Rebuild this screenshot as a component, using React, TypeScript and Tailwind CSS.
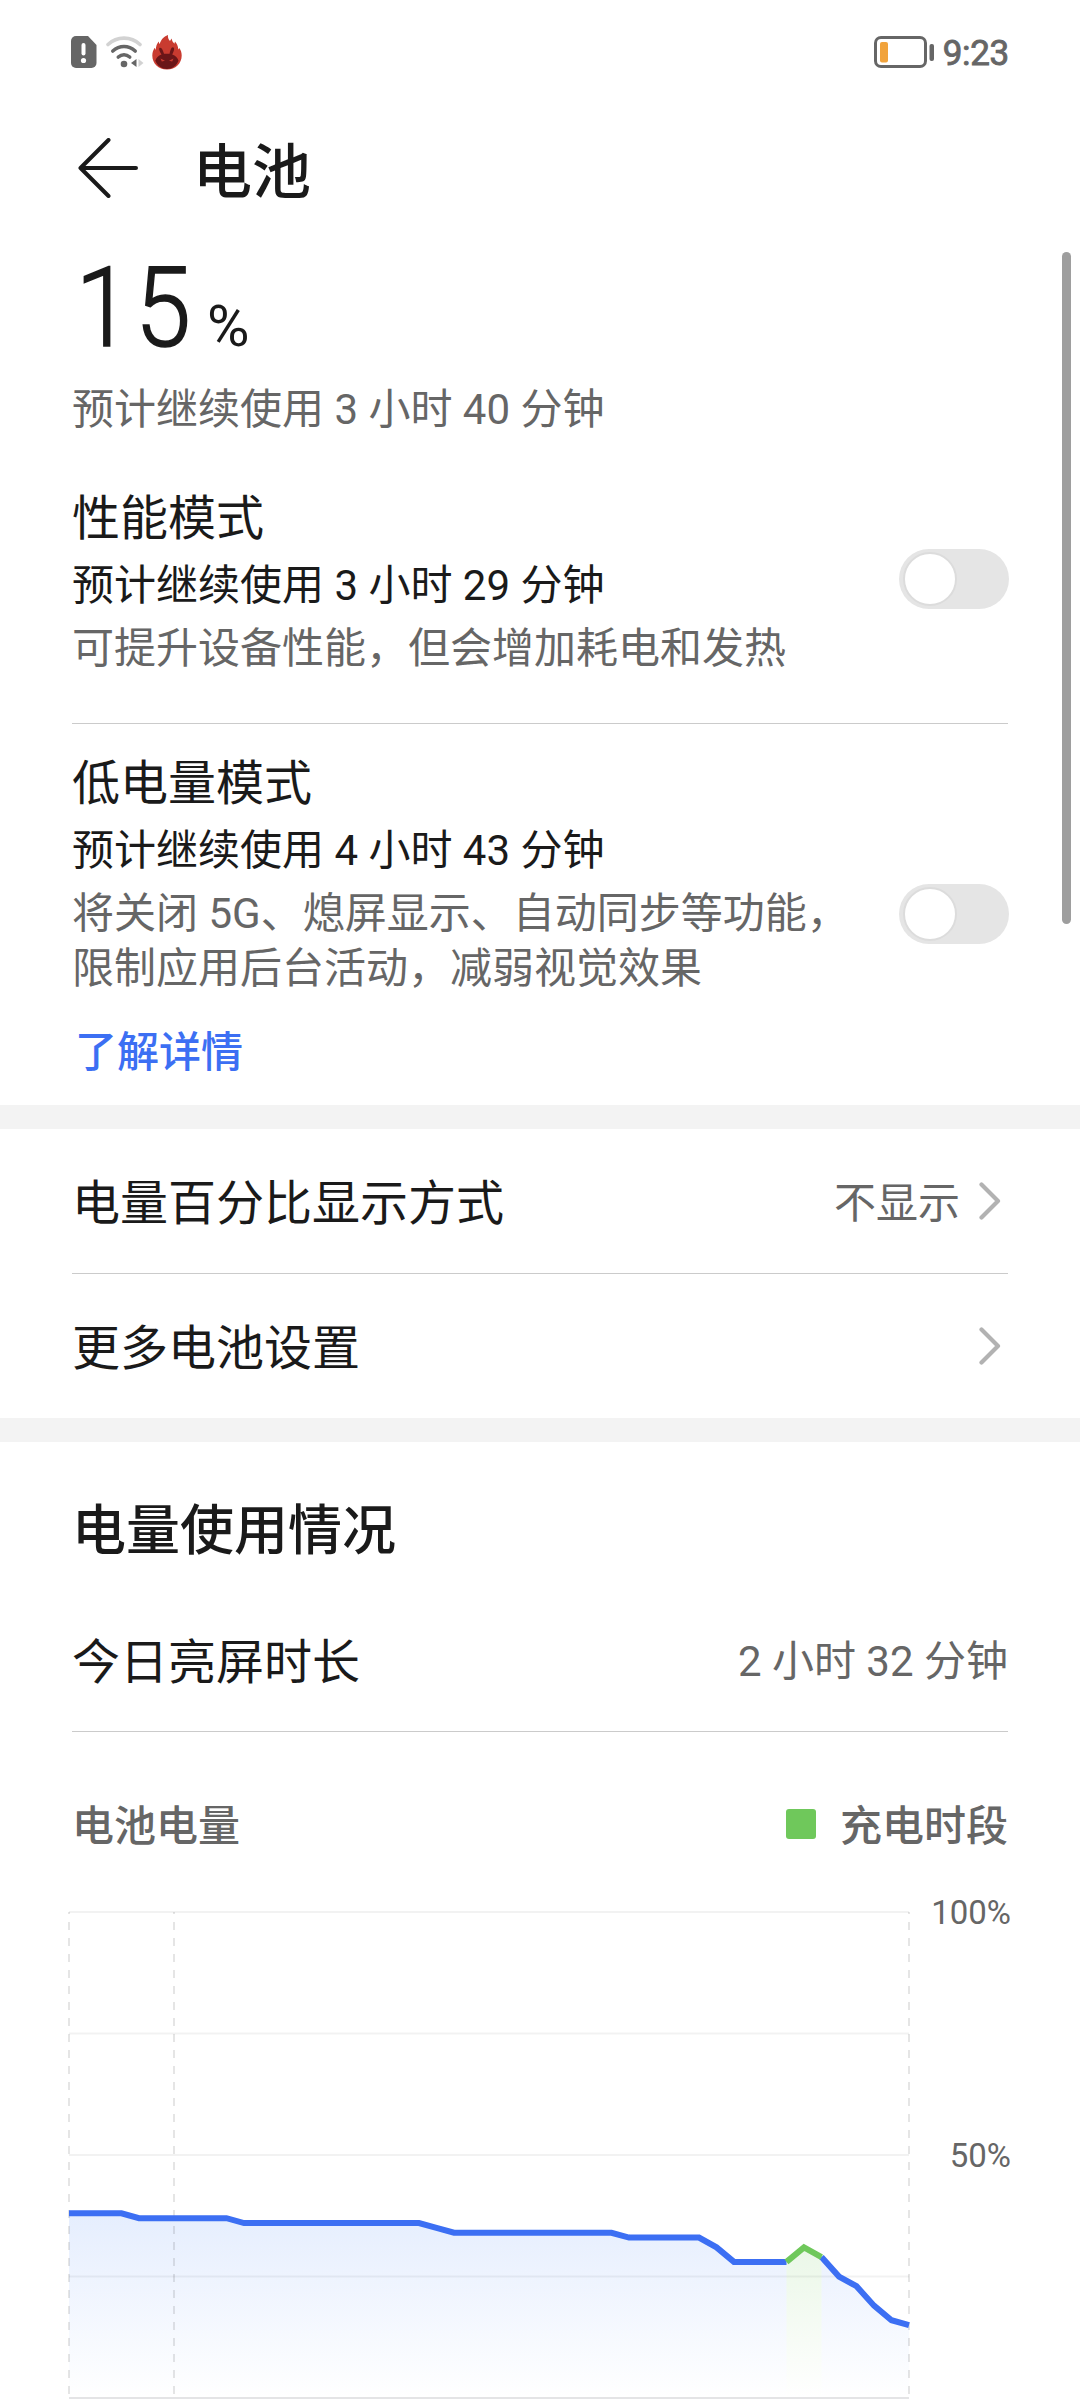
import type { ReactNode } from "react";

const STEP = 17.5;
const LEFT = 3;
const TOP = 2;
const HEIGHT = 486;

// battery level every half hour, oldest first
const levels = [
  38, 38, 38, 38, 37, 37, 37, 37, 37, 37, 36, 36, 36, 36, 36, 36, 36, 36, 36, 36, 36, 35, 34, 34, 34,
  34, 34, 34, 34, 34, 34, 34, 33, 33, 33, 33, 33, 31, 28, 28, 28, 28, 31, 29, 25, 23, 19, 16, 15,
];

const segments = [
  { from: 0, to: 41, charging: false },
  { from: 43, to: 48, charging: false },
  { from: 41, to: 43, charging: true },
];

const px = (i: number) => LEFT + i * STEP;
const py = (level: number) => TOP + HEIGHT * (1 - level / 100);

function linePoints(from: number, to: number) {
  return levels
    .slice(from, to + 1)
    .map((level, i) => `${px(from + i)},${py(level)}`)
    .join(" ");
}

function SimAlertIcon() {
  return (
    <svg width="26" height="32" viewBox="0 0 26 32">
      <path d="M5 0h12l8.500 9v18a5 5 0 0 1-5 5H5a5 5 0 0 1-5-5V5a5 5 0 0 1 5-5z" fill="#666" />
      <path d="M12.500 9v8.500" stroke="#fff" strokeWidth="4" strokeLinecap="round" />
      <circle cx="12.500" cy="24.500" r="2.600" fill="#fff" />
    </svg>
  );
}

function WifiIcon() {
  return (
    <svg width="38" height="32" viewBox="0 0 38 32" fill="none" strokeWidth="3.600" strokeLinecap="round">
      <path d="M2 8.500C11 0 25 0 34 8.500" stroke="#d2d2d2" />
      <path d="M6.800 15C13.500 9 22.500 9 29.200 15" stroke="#666" />
      <path d="M12.300 21C15.800 18 20.200 18 23.700 21" stroke="#666" />
      <circle cx="18" cy="28" r="3.300" fill="#666" />
      <path d="M30.500 23v8l-5.500-4z" fill="#666" />
      <path d="M32.500 23v8l5-4z" fill="#d2d2d2" />
    </svg>
  );
}

function FlameIcon() {
  return (
    <svg width="30" height="35" viewBox="0 0 30 35">
      <path
        d="M15 34.500C6.500 34.500.3 28.500.3 20.500c0-3.200 1-5.700 2.400-7.800l1 2.300c.2-3.700 1.300-6.500 3-8.500l.8 2.800C9 5 11.500 1.500 16 0c-.4 2.600.4 4.200 2 6l1.600-2.500c.4 2.300 1.300 3.700 2.800 5.300l.6-2.400c2 2.200 3 4.500 3.300 8l1-1.500c1.600 2.200 2.400 4.700 2.400 7.600 0 8-6.200 14-14.700 14z"
        fill="#c93b30"
      />
      <path
        d="M9.500 19.500C7.600 16.500 6.300 13.500 7.800 12.800c1.900-.8 3.400 3 4.200 5.900h5.600c.6-3 1.700-7 3.700-6.300 1.700.6.400 4.200-1.100 7.100 3.300 1.100 5.600 3.200 6.300 6.300C24.500 31 20.200 34 15 34S5.500 31 3.300 25.800c.8-3.100 3-5.200 6.200-6.300z"
        fill="#6b1618"
      />
      <path d="M8.500 23.500l4.500 2.300-3.200.7zM21.500 23.500L17 25.800l3.200.7z" fill="#c93b30" />
    </svg>
  );
}

function BatteryIcon() {
  return (
    <svg width="60" height="32" viewBox="0 0 60 32">
      <rect x="1.500" y="1.500" width="50" height="29" rx="5.500" fill="none" stroke="#666" strokeWidth="3" />
      <rect x="6" y="6" width="8" height="20.500" rx="2" fill="#f1a33c" />
      <rect x="55.500" y="8" width="4.500" height="17" rx="2" fill="#666" />
    </svg>
  );
}

function Chevron() {
  return (
    <svg width="22" height="38" viewBox="0 0 22 38" fill="none" className="mr-[7px]">
      <path d="M2.500 2.500L19 19 2.500 35.500" stroke="#b2b2b2" strokeWidth="4.200" strokeLinecap="round" strokeLinejoin="round" />
    </svg>
  );
}

function Toggle({ className }: { className: string }) {
  return (
    <button
      role="switch"
      aria-checked="false"
      className={`flex h-[60px] w-[110px] shrink-0 items-center rounded-full bg-[#e5e5e5] pl-1 ${className}`}
    >
      <span className="size-[54px] rounded-full border-2 border-[#dcdcdc] bg-white" />
    </button>
  );
}

function Divider() {
  return <div className="mx-[72px] h-px bg-[#cbcbcb]" />;
}

function Band() {
  return <div className="h-6 bg-[#f3f3f3]" />;
}

function Row({ label, className, children }: { label: string; className: string; children: ReactNode }) {
  return (
    <div className={`flex items-center justify-between px-[72px] ${className}`}>
      <span className="pt-[5px] text-[48px] leading-[64px]">{label}</span>
      <div className="flex items-center text-[42px] leading-[56px] text-[#666]">{children}</div>
    </div>
  );
}

function LevelChart() {
  const bottom = TOP + HEIGHT;
  return (
    <svg width="846" height="490" viewBox="0 0 846 490" fill="none" className="shrink-0">
      <defs>
        <linearGradient id="use" gradientUnits="userSpaceOnUse" x1="0" y1="300" x2="0" y2={bottom}>
          <stop offset="0" stopColor="#3478f6" stopOpacity="0.13" />
          <stop offset="1" stopColor="#3478f6" stopOpacity="0" />
        </linearGradient>
        <linearGradient id="charge" gradientUnits="userSpaceOnUse" x1="0" y1="330" x2="0" y2={bottom}>
          <stop offset="0" stopColor="#6fc85b" stopOpacity="0.15" />
          <stop offset="1" stopColor="#6fc85b" stopOpacity="0" />
        </linearGradient>
      </defs>
      {segments.map((s) => (
        <polygon
          key={s.from}
          points={`${px(s.from)},${bottom} ${linePoints(s.from, s.to)} ${px(s.to)},${bottom}`}
          fill={s.charging ? "url(#charge)" : "url(#use)"}
        />
      ))}
      {[100, 75, 50, 25].map((level) => (
        <path key={level} d={`M${LEFT} ${py(level)}H${px(48)}`} stroke="#000" strokeOpacity="0.05" strokeWidth="2" />
      ))}
      {[0, 6, 48].map((i) => (
        <path
          key={i}
          d={`M${px(i)} ${TOP}V${bottom}`}
          stroke="#000"
          strokeOpacity="0.1"
          strokeWidth="2"
          strokeDasharray="8 8"
          strokeDashoffset="6"
        />
      ))}
      <path d={`M${LEFT} ${bottom}H${px(48)}`} stroke="#e4e4e6" strokeWidth="2" />
      {segments.map((s) => (
        <polyline
          key={s.from}
          points={linePoints(s.from, s.to)}
          stroke={s.charging ? "#6fc85b" : "#3c6ff3"}
          strokeWidth="6"
        />
      ))}
    </svg>
  );
}

export default function App() {
  return (
    <div className="relative h-[2400px] w-[1080px] overflow-hidden bg-white font-['Roboto','Noto_Sans_CJK_SC',sans-serif] text-[#1a1a1a]">
      <div className="flex h-[104px] items-center justify-between pr-[71px] pl-[71px]">
        <div className="flex items-center">
          <SimAlertIcon />
          <span className="ml-[9px]">
            <WifiIcon />
          </span>
          <span className="ml-2">
            <FlameIcon />
          </span>
        </div>
        <div className="flex items-center gap-[9px] text-[35px] leading-none text-[#666]">
          <BatteryIcon />
          <span className="pt-[3px] tracking-[-0.3px] [-webkit-text-stroke:0.9px_#666]">9:23</span>
        </div>
      </div>

      <header className="flex h-[132px] items-center pl-[78px]">
        <svg width="60" height="60" viewBox="0 0 60 60" fill="none" className="-mt-1">
          <path
            d="M58 30H2.500M30.500 2L2.500 30l28 28"
            stroke="#1a1a1a"
            strokeWidth="4"
            strokeLinecap="round"
            strokeLinejoin="round"
          />
        </svg>
        <h1 className="mt-[5px] ml-[55px] text-[59px] leading-[72px] font-medium">电池</h1>
      </header>

      <section className="px-[72px]">
        <div className="flex h-[144px] items-baseline">
          <span className="w-[132px] origin-left scale-x-90 pl-[4px] text-[112px] leading-[144px] font-light tracking-[4px] [-webkit-text-stroke:1.6px_#1a1a1a]">
            15
          </span>
          <span className="ml-[3px] text-[58px] leading-none">%</span>
        </div>
        <p className="pt-[2px] text-[42px] leading-[56px] text-[#666]">预计继续使用 3 小时 40 分钟</p>
      </section>

      <section className="flex h-[285px] items-start justify-between pt-[49px] pr-[71px] pl-[72px]">
        <div>
          <h2 className="text-[48px] leading-[64px]">性能模式</h2>
          <p className="mt-[7px] text-[42px] leading-[56px]">预计继续使用 3 小时 29 分钟</p>
          <p className="mt-[7px] text-[42px] leading-[56px] text-[#666]">可提升设备性能，但会增加耗电和发热</p>
        </div>
        <Toggle className="mt-[62px]" />
      </section>
      <Divider />
      <section className="flex h-[381px] items-start justify-between pt-[28px] pr-[71px] pl-[72px]">
        <div>
          <h2 className="text-[48px] leading-[64px]">低电量模式</h2>
          <p className="mt-[7px] text-[42px] leading-[56px]">预计继续使用 4 小时 43 分钟</p>
          <p className="mt-[7px] text-[42px] leading-[55px] whitespace-nowrap text-[#666]">
            将关闭 5G、熄屏显示、自动同步等功能，
            <br />
            限制应用后台活动，减弱视觉效果
          </p>
          <a className="mt-[29px] ml-[3px] block text-[42px] leading-[56px] font-medium text-[#3c6ff3]">了解详情</a>
        </div>
        <Toggle className="mt-[132px]" />
      </section>

      <Band />
      <Row label="电量百分比显示方式" className="h-36">
        <span className="mr-[19px] pt-[5px]">不显示</span>
        <Chevron />
      </Row>
      <Divider />
      <Row label="更多电池设置" className="h-36">
        <Chevron />
      </Row>
      <Band />

      <h2 className="mt-[54px] px-[72px] text-[54px] leading-[72px] font-medium">电量使用情况</h2>
      <Row label="今日亮屏时长" className="mt-[21px] h-[142px]">
        <span className="pt-[3px]">2 小时 32 分钟</span>
      </Row>
      <Divider />

      <div className="mt-[65px] flex items-center justify-between px-[72px] text-[42px] leading-[56px] font-medium text-[#666]">
        <span className="pt-[2px]">电池电量</span>
        <div className="flex items-center">
          <span className="mr-6 mb-[5px] size-[30px] rounded-[3px] bg-[#6fc85b]" />
          <span className="pt-[2px]">充电时段</span>
        </div>
      </div>
      <div className="mt-[55px] flex justify-between pr-[69px] pl-[66px] text-[33px] leading-[40px] text-[#666]">
        <LevelChart />
        <div className="flex flex-col items-end">
          <span className="-mt-[17px]">100%</span>
          <span className="mt-[203px]">50%</span>
        </div>
      </div>

      <div className="absolute top-[252px] right-[9px] h-[672px] w-[9px] rounded-full bg-[#9e9e9e]" />
    </div>
  );
}
